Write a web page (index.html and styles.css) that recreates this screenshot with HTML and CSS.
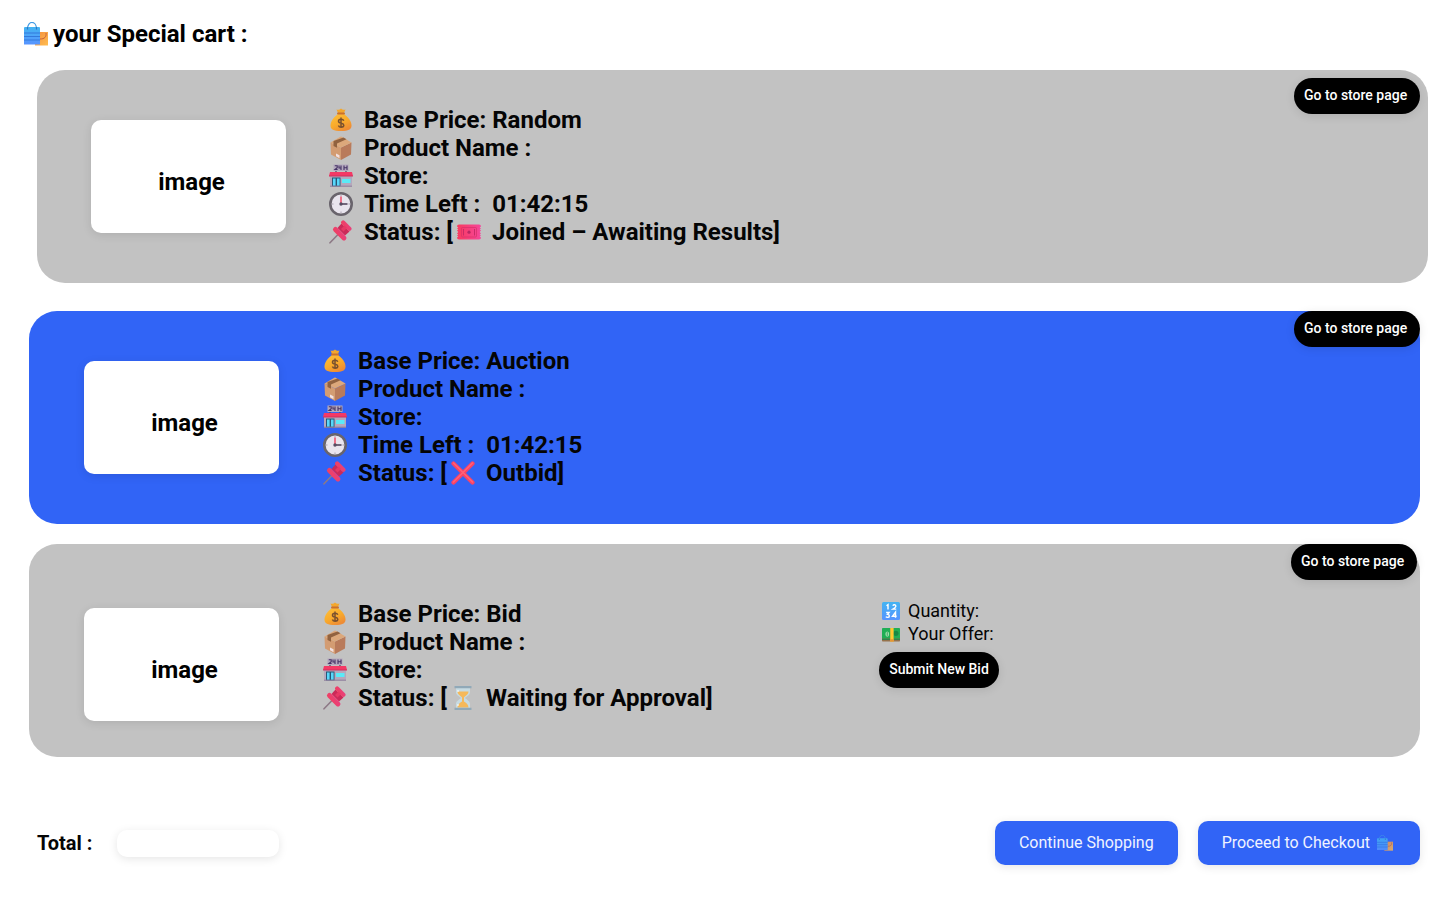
FILE: index.html
```html
<!DOCTYPE html>
<html lang="en">
<head>
<meta charset="utf-8">
<meta name="viewport" content="width=device-width, initial-scale=1">
<title>Special cart</title>
<link rel="stylesheet" href="styles.css">
</head>
<body>
<svg class="sprite" aria-hidden="true">
  <defs>
    <linearGradient id="gold" x1="0" y1="0" x2="0.6" y2="1"><stop offset="0" stop-color="#ffc23a"/><stop offset=".6" stop-color="#f9aa2b"/><stop offset="1" stop-color="#ee8c35"/></linearGradient>
    <linearGradient id="rose" x1="0" y1="0" x2="1" y2="1"><stop offset="0" stop-color="#f0405f"/><stop offset="1" stop-color="#e8407f"/></linearGradient>
    <linearGradient id="pink" x1="0" y1="0" x2="1" y2="0"><stop offset="0" stop-color="#f93a5e"/><stop offset="1" stop-color="#f5479b"/></linearGradient>
    <linearGradient id="sky" x1="0" y1="0" x2="0" y2="1"><stop offset="0" stop-color="#43b4f2"/><stop offset="1" stop-color="#5794ff"/></linearGradient>
    <linearGradient id="amber" x1="0" y1="0" x2="1" y2="1"><stop offset="0" stop-color="#f48e3e"/><stop offset="1" stop-color="#ffbd50"/></linearGradient>
  </defs>
  <symbol id="bags" viewBox="0 0 24 24">
    <path d="M11 10h13v13.500H11z" fill="url(#amber)"/>
    <path d="M22 11c.5 4-1.500 6-6 6" fill="none" stroke="#c8603d" stroke-width="1"/>
    <path d="M3.500 7C3.500-1.800 12.500-1.800 12.500 7" fill="none" stroke="#409be5" stroke-width="1.200"/>
    <path d="M0 6q0-1 1-1h14q1 0 1 1v16.500H0z" fill="url(#sky)"/>
    <path d="M0 11h16M0 14.500h16M0 18h16" stroke="#3279dc" stroke-width="1"/>
    <path d="M3.500 5v2.500M12.500 5v2.500" stroke="#2f78c3" stroke-width="1.200"/>
  </symbol>
  <symbol id="money" viewBox="0 0 24 24">
    <path d="M9 5 7.500 1.500Q10 2.500 12 .5q2 2 4.500 1L15 5z" fill="#f3a72e"/>
    <path d="M9 6h6c4 3 7.500 7 7.500 11.500 0 4-3 5.500-10.500 5.500S1.500 21.500 1.500 17.500C1.500 13 5 9 9 6z" fill="url(#gold)"/>
    <rect x="8" y="4.500" width="8" height="2" rx="1" fill="#c9702e"/>
    <path d="M14.800 12.700c-.8-1.900-5.300-1.900-5.300.5 0 2.800 5.300 1.400 5.300 4 0 2.400-4.500 2.600-5.400.2M12 9.500v10.500" fill="none" stroke="#79502f" stroke-width="1.500"/>
  </symbol>
  <symbol id="box" viewBox="0 0 24 24">
    <path d="m1.500 6.500 10.500 5V24L2 18.500z" fill="#d39c72"/>
    <path d="m12 11.500 10.500-5-.5 12L12 24z" fill="#b97b5b"/>
    <path d="M11.300.7q.7-.4 1.400 0l9.800 5.800L12 11.500 1.500 6.500z" fill="#dca87b"/>
    <path d="M4.500 5 14.500 1.500l3 1.800L8 7.500v4.300L4.500 10z" fill="#91623f"/>
    <path d="m7 17.500 3.500 1.800v2.900L7 20.300z" fill="#f1e1e2"/>
  </symbol>
  <symbol id="shop" viewBox="0 0 24 24">
    <path d="M7 6v3M17 6v3" stroke="#524d66" stroke-width="1.300"/>
    <rect x="4.500" y=".5" width="15" height="6.500" fill="#b3a8bd"/>
    <path d="M5.800 1.800h2.400v1.900L6 5.500h2.600M10 1.500v2.500h2.500M12 1.500v4.500M15 1.500V6M18 1.500V6M15 3.700h3" fill="none" stroke="#443164" stroke-width="1.100"/>
    <path d="M1 11h22v11.500H1z" fill="#b5a8bd"/>
    <path d="M1 8h22l1 4H0z" fill="#f43965"/>
    <path d="M0 11.500h24v1H0z" fill="#cd315f"/>
    <path d="M3 13.500h8.500v9H3z" fill="#275776"/>
    <path d="M4 14.500h2.600v7.200H4zM8 14.500h2.600v7.200H8z" fill="#58d7fb"/>
    <path d="M13 15h8.500v4H13z" fill="#5aeaf7"/>
    <path d="M1 22.200h22" stroke="#8e7e9b"/>
  </symbol>
  <symbol id="clock" viewBox="0 0 24 24">
    <circle cx="12" cy="12" r="10.700" fill="#e9e5ee" stroke="#69646c" stroke-width="2.600"/>
    <path d="M12 3v1.500M12 19.500V21M3 12h1.500M19.500 12H21" stroke="#aaa1af" stroke-width="1"/>
    <path d="M12 4.500V12" stroke="#ee7189" stroke-width="2"/>
    <path d="M12 12h6.500" stroke="#64576c" stroke-width="1.800"/>
    <circle cx="12" cy="12" r="1.700" fill="#574c62"/>
  </symbol>
  <symbol id="pin" viewBox="0 0 24 24">
    <path d="M9.500 14 1 22.800" stroke="#8d7986" stroke-width="1.600" stroke-linecap="round"/>
    <path d="m12.500 3.500 8 8-4.500 4L8.500 8z" fill="#cb2a59"/>
    <rect x="9.200" y="-1.800" width="5" height="17" rx="2.500" transform="translate(-1 7) rotate(-45 11.700 6.700)" fill="url(#rose)"/>
    <rect x="15.200" y="-.8" width="4.200" height="13" rx="2.100" transform="rotate(-45 17.300 5.700)" fill="url(#rose)"/>
    <path d="m12 9 3.500-3.500 2.500 2.500-3.500 3.500z" fill="#e63865"/>
  </symbol>
  <symbol id="ticket" viewBox="0 0 24 24">
    <path d="M2 4.500h20q2 0 2 2l-1.300 1 1.300 1-1.300 1 1.300 1-1.300 1.500 1.300 1.500-1.300 1 1.300 1-1.300 1 1.300 1q0 2-2 2H2q-2 0-2-2l1.300-1-1.300-1 1.300-1-1.300-1 1.300-1.500L0 10.500l1.300-1-1.300-1 1.300-1-1.300-1q0-2 2-2z" fill="url(#pink)"/>
    <rect x="4.500" y="7.500" width="15" height="9.500" rx="1" fill="none" stroke="#d72f6a" stroke-width=".7"/>
    <path d="M6.500 9v6.500M17.500 9v6.500" stroke="#c82b67" stroke-width="1"/>
    <circle cx="12" cy="12.200" r="1.600" fill="#b82762"/>
  </symbol>
  <symbol id="cross" viewBox="0 0 24 24">
    <path d="m2.500 2.500 19 19m0-19-19 19" stroke="#fb4264" stroke-width="4.200" stroke-linecap="round"/>
    <path d="m2.500 2 19 19m0-19-19 19" stroke="#ff6278" stroke-width="1.500" stroke-linecap="round"/>
  </symbol>
  <symbol id="hourglass" viewBox="0 0 24 24">
    <path d="M5 2h14v4c0 3-3 4-5 6 2 2 5 3 5 6v4H5v-4c0-3 3-4 5-6-2-2-5-3-5-6z" fill="#c7dbe2"/>
    <path d="M6.500 5.500h11c0 3-3 4-4.500 6v4c2 1 4.500 3 4.500 6h-11c0-3 2.500-5 4.500-6v-4c-1.500-2-4.500-3-4.500-6z" fill="#f5b95b"/>
    <path d="M3.500 0h17v2.200h-17zM3.500 21.800h17V24h-17z" fill="#91a9b8"/>
    <path d="M7 4v2M7 18v2" stroke="#fff" stroke-width="1"/>
  </symbol>
  <symbol id="digits" viewBox="0 0 24 24">
    <rect width="24" height="24" rx="2" fill="url(#sky)"/>
    <path d="m6 5 2-1.500V10M14.500 5c1-2 4-1.500 4 .5 0 1.500-2 2.500-4 4h4.500M5.500 14h4L7.500 16.500c3 0 3 4 0 4-1 0-2-.5-2.300-1M18 21v-7.500L14 19h5.500" fill="none" stroke="#fff" stroke-width="1.900"/>
  </symbol>
  <symbol id="cash" viewBox="0 0 24 24">
    <path d="M0 5q0-1 1-1h22q1 0 1 1v14H0z" fill="#20ae55"/>
    <path d="M0 18h24v3q0 1-1 1H1q-1 0-1-1z" fill="#95724c"/>
    <path d="M0 19h24" stroke="#188b4d" stroke-width="1.500"/>
    <ellipse cx="7" cy="12" rx="2.500" ry="3.500" fill="#9ee5ad"/>
    <circle cx="18.500" cy="11" r="3.500" fill="#168944"/>
    <path d="M7 9.500v5" stroke="#25884a" stroke-width="1"/>
    <path d="M11 4h4.500v18H11z" fill="#ffc832"/>
    <path d="M11 19h4.500v3H11z" fill="#e79233"/>
  </symbol>
</svg>

<main class="page">
  <h1 class="title"><svg class="icon"><use href="#bags"/></svg>your Special cart :</h1>

  <section class="card card-random">
    <div class="thumb">image</div>
    <ul class="details">
      <li><svg class="icon"><use href="#money"/></svg>Base Price: Random</li>
      <li><svg class="icon"><use href="#box"/></svg>Product Name :</li>
      <li><svg class="icon"><use href="#shop"/></svg>Store:</li>
      <li><svg class="icon"><use href="#clock"/></svg>Time Left :&nbsp; 01:42:15</li>
      <li><svg class="icon"><use href="#pin"/></svg><span class="status">Status: [<svg class="icon"><use href="#ticket"/></svg>Joined – Awaiting Results]</span></li>
    </ul>
    <button class="pill store" type="button">Go to store page</button>
  </section>

  <section class="card card-auction">
    <div class="thumb">image</div>
    <ul class="details">
      <li><svg class="icon"><use href="#money"/></svg>Base Price: Auction</li>
      <li><svg class="icon"><use href="#box"/></svg>Product Name :</li>
      <li><svg class="icon"><use href="#shop"/></svg>Store:</li>
      <li><svg class="icon"><use href="#clock"/></svg>Time Left :&nbsp; 01:42:15</li>
      <li><svg class="icon"><use href="#pin"/></svg><span class="status">Status: [<svg class="icon"><use href="#cross"/></svg>Outbid]</span></li>
    </ul>
    <button class="pill store" type="button">Go to store page</button>
  </section>

  <section class="card card-bid">
    <div class="thumb">image</div>
    <ul class="details">
      <li><svg class="icon"><use href="#money"/></svg>Base Price: Bid</li>
      <li><svg class="icon"><use href="#box"/></svg>Product Name :</li>
      <li><svg class="icon"><use href="#shop"/></svg>Store:</li>
      <li><svg class="icon"><use href="#pin"/></svg><span class="status">Status: [<svg class="icon"><use href="#hourglass"/></svg>Waiting for Approval]</span></li>
    </ul>
    <div class="offer">
      <p class="offer-line"><svg class="icon-small"><use href="#digits"/></svg>Quantity:</p>
      <p class="offer-line"><svg class="icon-small"><use href="#cash"/></svg>Your Offer:</p>
      <button class="pill submit" type="button">Submit New Bid</button>
    </div>
    <button class="pill store" type="button">Go to store page</button>
  </section>

  <footer class="summary">
    <label class="total-label" for="total">Total :</label>
    <input class="total" id="total" type="text" readonly>
    <div class="actions">
      <button class="action" type="button">Continue Shopping</button>
      <button class="action checkout" type="button">Proceed to Checkout <svg class="icon-tiny"><use href="#bags"/></svg></button>
    </div>
  </footer>
</main>
</body>
</html>
```
FILE: styles.css
```css
* {
  box-sizing: border-box;
}

body {
  margin: 0;
  background: #fff;
  color: #050505;
  font-family: Roboto, sans-serif;
}

.sprite {
  position: absolute;
  width: 0;
  height: 0;
}

.page {
  padding: 20px 20px 32px 29px;
}

.title {
  display: flex;
  align-items: center;
  gap: 5px;
  margin: 0 0 22px -5px;
  color: #000;
  font-size: 24px;
  font-weight: 700;
  line-height: 28px;
}

.icon {
  flex: none;
  width: 24px;
  height: 24px;
}

.card {
  display: flex;
  align-items: flex-start;
  min-height: 213px;
  padding-left: 55px;
  border-radius: 28px;
  background: #c2c2c2;
}

.card-random {
  margin: 0 -8px 28px 8px;
  padding-left: 54px;
}

.card-auction {
  margin-bottom: 20px;
  background: #3164f6;
}

.thumb {
  display: flex;
  flex: none;
  align-items: center;
  justify-content: center;
  width: 195px;
  height: 113px;
  margin: 50px 43px 0 0;
  padding: 10px 0 0 6px;
  border-radius: 10px;
  background: #fff;
  box-shadow: 0 2px 10px rgba(0, 0, 0, 0.1);
  color: #000;
  font-size: 24px;
  font-weight: 700;
  line-height: 28px;
}

.details {
  margin: 36px 0 0;
  padding: 0;
  list-style: none;
  font-size: 24px;
  font-weight: 700;
  line-height: 28px;
}

.details li {
  display: flex;
  align-items: center;
  gap: 11px;
}

.status {
  display: flex;
  align-items: center;
}

.status .icon {
  margin: 0 11px 0 4px;
}

.card-auction .thumb,
.card-bid .thumb {
  margin-right: 44px;
}

.card-bid .thumb {
  margin-top: 64px;
}

.card-bid .details {
  flex: 0 0 556px;
  margin-top: 56px;
}

.offer {
  margin-top: 55px;
}

.offer-line {
  display: flex;
  align-items: center;
  gap: 8px;
  margin: 0;
  padding-left: 3px;
  font-size: 18px;
  line-height: 23px;
}

.icon-small {
  width: 18px;
  height: 18px;
}

.pill {
  height: 36px;
  padding: 0 10px 2px;
  border: 0;
  border-radius: 18px;
  background: #000;
  box-shadow: 0 2px 10px rgba(0, 0, 0, 0.1);
  color: #fff;
  font-family: inherit;
  font-size: 14px;
  font-weight: 500;
  line-height: 20px;
  white-space: nowrap;
}

.submit {
  width: 120px;
  margin-top: 7px;
}

.store {
  width: 126px;
  margin-left: auto;
  padding-right: 13px;
}

.card-random .store {
  margin-top: 8px;
  margin-right: 8px;
}

.card-bid .store {
  margin-right: 3px;
}

.summary {
  display: flex;
  align-items: center;
  margin-top: 64px;
  padding-left: 8px;
}

.total-label {
  width: 80px;
  font-size: 20px;
  font-weight: 700;
  line-height: 24px;
}

.total {
  width: 162px;
  height: 27px;
  padding: 0 8px;
  border: 0;
  border-radius: 10px;
  background: #fff;
  box-shadow: 0 2px 10px rgba(0, 0, 0, 0.1);
  font: inherit;
}

.actions {
  display: flex;
  gap: 20px;
  margin-left: auto;
}

.action {
  display: flex;
  align-items: center;
  gap: 7px;
  height: 44px;
  padding: 0 24px;
  border: 0;
  border-radius: 10px;
  background: #3164f6;
  box-shadow: 0 2px 10px rgba(0, 0, 0, 0.1);
  color: #f0f3ff;
  font-family: inherit;
  font-size: 16px;
  font-weight: 400;
  line-height: 20px;
}

.checkout {
  padding-right: 27px;
}

.icon-tiny {
  width: 16px;
  height: 16px;
  opacity: 0.8;
}
```
